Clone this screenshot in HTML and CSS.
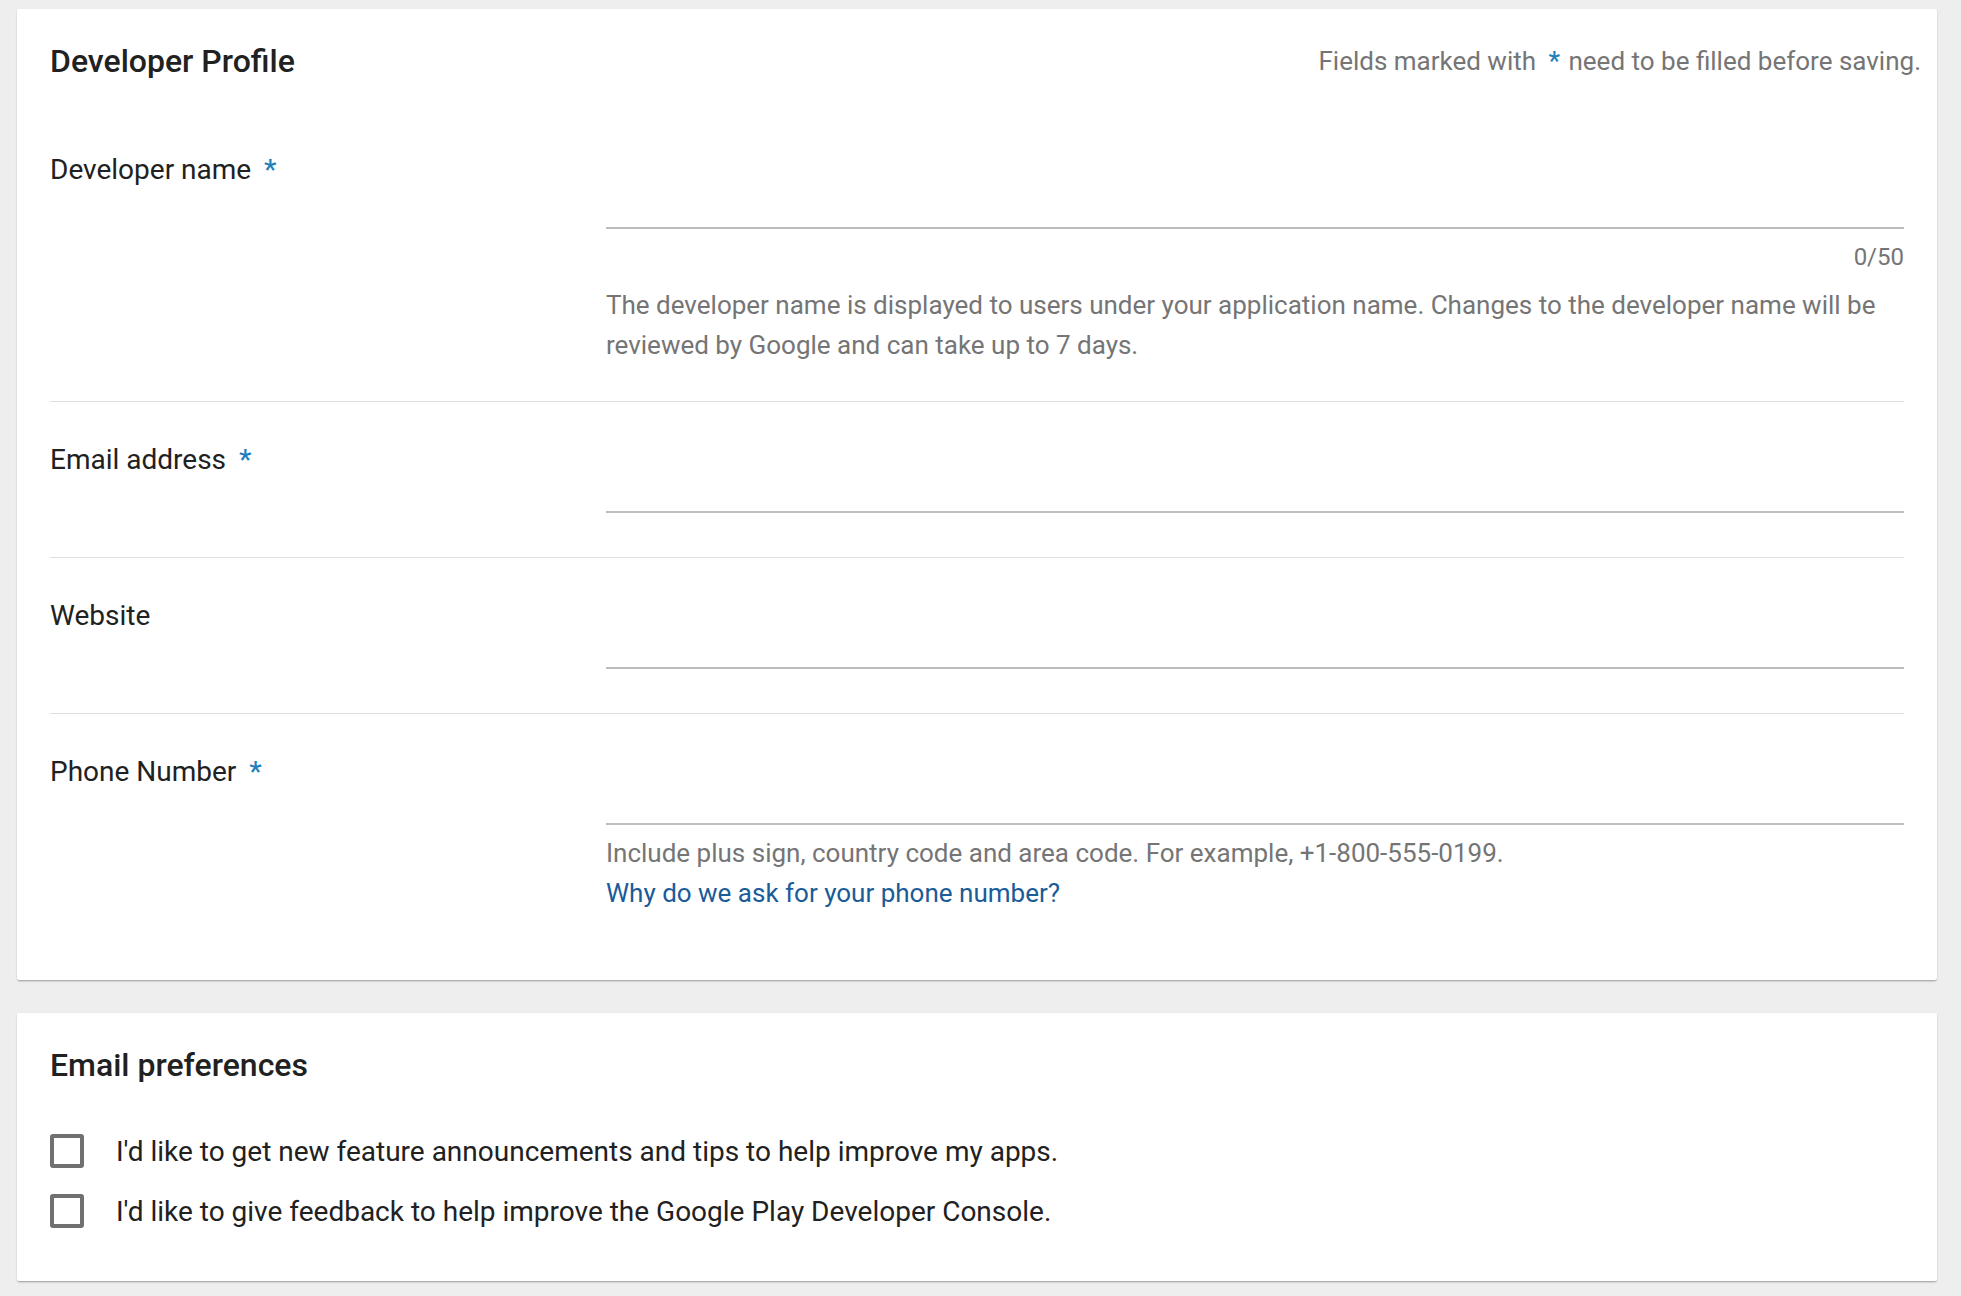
FILE: index.html
```html
<!DOCTYPE html>
<html lang="en">
<head>
<meta charset="utf-8">
<title>Developer Profile</title>
<link rel="stylesheet" href="styles.css">
</head>
<body>
<main class="page">
  <section class="card profile">
    <header class="card-header">
      <h2 class="card-title">Developer Profile</h2>
      <p class="hint">Fields marked with <span class="req">*</span> need to be filled before saving.</p>
    </header>

    <div class="row row-first">
      <label class="row-label">Developer name <span class="req">*</span></label>
      <div class="row-field">
        <div class="input"></div>
        <div class="counter">0/50</div>
        <p class="help">The developer name is displayed to users under your application name. Changes to the developer name will be reviewed by Google and can take up to 7 days.</p>
      </div>
    </div>

    <div class="row">
      <label class="row-label">Email address <span class="req">*</span></label>
      <div class="row-field">
        <div class="input"></div>
      </div>
    </div>

    <div class="row">
      <label class="row-label">Website</label>
      <div class="row-field">
        <div class="input"></div>
      </div>
    </div>

    <div class="row row-last">
      <label class="row-label">Phone Number <span class="req">*</span></label>
      <div class="row-field">
        <div class="input"></div>
        <p class="help help-phone">Include plus sign, country code and area code. For example, +1-800-555-0199.</p>
        <a class="link" href="#">Why do we ask for your phone number?</a>
      </div>
    </div>
  </section>

  <section class="card prefs">
    <h2 class="card-title">Email preferences</h2>
    <div class="checks">
      <label class="check"><span class="box"></span><span class="check-text">I'd like to get new feature announcements and tips to help improve my apps.</span></label>
      <label class="check"><span class="box"></span><span class="check-text">I'd like to give feedback to help improve the Google Play Developer Console.</span></label>
    </div>
  </section>
</main>
</body>
</html>
```

FILE: styles.css
```css
* { box-sizing: border-box; }

html, body {
  margin: 0;
  padding: 0;
  background: #eeeeee;
  font-family: Roboto, "Liberation Sans", Arial, sans-serif;
  color: #212121;
}

.page {
  padding: 9px 24px 15px 17px;
  display: flex;
  flex-direction: column;
  gap: 33px;
}

.card {
  background: #ffffff;
  border-radius: 2px;
  box-shadow: 0 1px 2px 0 rgba(0,0,0,0.16), 0 2px 2px -1px rgba(0,0,0,0.22);
  padding: 0 33px;
}

.profile { height: 971px; }
.prefs { height: 268px; padding-top: 32px; }

.card-header {
  display: flex;
  justify-content: space-between;
  align-items: center;
  padding-top: 32px;
  margin-bottom: 38px;
  margin-right: -17px;
}

.card-title {
  margin: 0;
  font-size: 32px;
  line-height: 40px;
  font-weight: 500;
  color: #212121;
}

.hint {
  margin: 0;
  font-size: 26px;
  line-height: 40px;
  color: #757575;
}

.req {
  color: #1e7fbd;
  font-weight: 500;
  margin-left: 6px;
  margin-right: 2px;
}

.row {
  display: grid;
  grid-template-columns: 556px 1fr;
  border-top: 1px solid #e0e0e0;
  padding-bottom: 44px;
}

.row-first {
  border-top: none;
  padding-bottom: 36px;
}

.row-last { padding-bottom: 0; }

.row-label {
  font-size: 28px;
  line-height: 40px;
  padding-top: 38px;
  color: #212121;
}

.row-first .row-label { padding-top: 31px; }

.row-field {
  display: flex;
  flex-direction: column;
}

.input {
  height: 111px;
  border-bottom: 2px solid #bdbdbd;
}

.row-first .input { height: 110px; }

.counter {
  margin-top: 12px;
  text-align: right;
  font-size: 24px;
  line-height: 32px;
  color: #757575;
}

.help {
  margin: 12px 0 0;
  font-size: 26px;
  line-height: 40px;
  color: #757575;
}

.help-phone { margin-top: 8px; }

.link {
  font-size: 26px;
  line-height: 40px;
  color: #1a5b98;
  text-decoration: none;
  align-self: flex-start;
}

.checks {
  margin-top: 36px;
  display: flex;
  flex-direction: column;
}

.check {
  display: flex;
  align-items: center;
  height: 60px;
  gap: 32px;
}

.box {
  width: 34px;
  height: 34px;
  border: 4px solid #707070;
  border-radius: 3px;
  flex: none;
}

.check-text {
  font-size: 28px;
  line-height: 40px;
  color: #212121;
  position: relative;
  top: 1px;
}
```
